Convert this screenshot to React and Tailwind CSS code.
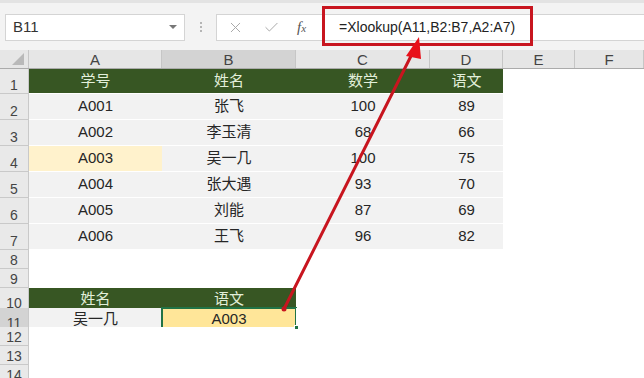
import { X, Check } from 'lucide-react'

const font = { fontFamily: '"Liberation Sans", "Noto Sans CJK SC", sans-serif' }

const GREEN = 'bg-[#375623] text-[#e2efda]'
const GRAY = 'bg-[#f2f2f2] text-[#262626]'

const rows = [
  { n: 1, h: 'h-[25px]', cells: [['学号', GREEN], ['姓名', GREEN], ['数学', GREEN], ['语文', GREEN]] },
  { n: 2, h: 'h-[26px]', cells: [['A001', GRAY], ['张飞', GRAY], ['100', GRAY], ['89', GRAY]] },
  { n: 3, h: 'h-[26px]', cells: [['A002', GRAY], ['李玉清', GRAY], ['68', GRAY], ['66', GRAY]] },
  { n: 4, h: 'h-[26px]', cells: [['A003', 'bg-[#fff2cc] text-[#262626]'], ['吴一几', GRAY], ['100', GRAY], ['75', GRAY]] },
  { n: 5, h: 'h-[26px]', cells: [['A004', GRAY], ['张大遇', GRAY], ['93', GRAY], ['70', GRAY]] },
  { n: 6, h: 'h-[26px]', cells: [['A005', GRAY], ['刘能', GRAY], ['87', GRAY], ['69', GRAY]] },
  { n: 7, h: 'h-[26px]', cells: [['A006', GRAY], ['王飞', GRAY], ['96', GRAY], ['82', GRAY]] },
  { n: 8, h: 'h-[19px]', cells: [] },
  { n: 9, h: 'h-[19px]', cells: [] },
  { n: 10, h: 'h-[20px]', cells: [['姓名', GREEN], ['语文', GREEN]] },
  { n: 11, h: 'h-[19px]', cells: [['吴一几', GRAY], ['A003', 'bg-[#ffe699] text-[#262626] outline-2 outline-[#217346] -outline-offset-1']], sel: true },
  { n: 12, h: 'h-[19px]', cells: [] },
  { n: 13, h: 'h-[19px]', cells: [] },
  { n: 14, h: 'h-[19px]', cells: [] },
]

const cols = ['A', 'B', 'C', 'D', 'E', 'F']
const grid = 'grid grid-cols-[29px_133px_134px_134px_73px_72px_1fr]'

function Toolbar() {
  return (
    <div className="h-[50px] bg-[#f3f3f3] border-t-[3px] border-[#e3e3e3] flex items-center pt-[1px]">
      <div className="ml-[5px] w-[180px] h-[27px] bg-white border border-[#d4d4d4] flex items-center justify-between px-[7px]">
        <span className="text-[15px] text-[#333]">B11</span>
        <span className="w-0 h-0 border-l-[4px] border-r-[4px] border-t-[4px] border-l-transparent border-r-transparent border-t-[#777]" />
      </div>
      <div className="w-[31px] flex flex-col items-center gap-[2px]">
        <span className="w-[2px] h-[2px] bg-[#b5b5b5]" />
        <span className="w-[2px] h-[2px] bg-[#b5b5b5]" />
        <span className="w-[2px] h-[2px] bg-[#b5b5b5]" />
      </div>
      <div className="flex-1 h-[27px] bg-white border border-[#d4d4d4] border-r-0 flex items-center">
        <X size={17} strokeWidth={1.4} className="ml-[10px] text-[#a8a8a8]" />
        <Check size={17} strokeWidth={1.4} className="ml-[19px] text-[#a8a8a8]" />
        <span className="ml-[17px] text-[15px] italic text-[#555]" style={{ fontFamily: '"Liberation Serif", serif' }}>
          f<span className="text-[11px]">x</span>
        </span>
        <span className="ml-[33px] text-[14px] text-[#222]">=Xlookup(A11,B2:B7,A2:A7)</span>
      </div>
    </div>
  )
}

function ColHeaders() {
  return (
    <div className={`${grid} h-[19px] bg-[#e6e6e6] border-b border-[#ababab]`}>
      <div className="flex items-end justify-end pr-[4px] pb-[3px] border-r border-[#c6c6c6]">
        <svg width="12" height="12" viewBox="0 0 12 12">
          <polygon points="12,0 12,12 0,12" fill="#b9b9b9" />
        </svg>
      </div>
      {cols.map((c) => (
        <div
          key={c}
          className={`flex items-end justify-center text-[15px] leading-[17px] text-[#444] border-r border-[#c6c6c6] ${c === 'B' ? 'bg-[#d3d3d3]' : ''}`}
        >
          {c}
        </div>
      ))}
    </div>
  )
}

function Row({ r }) {
  return (
    <div className={`${grid} ${r.h}`}>
      <div
        className={`flex items-end justify-center text-[14px] leading-[14px] pb-[1px] text-[#444] border-r border-b border-[#c9c9c9] ${r.sel ? 'bg-[#d3d3d3]' : 'bg-[#e9e9e9]'}`}
      >
        {r.n}
      </div>
      {cols.map((c, i) => {
        const cell = r.cells[i]
        if (!cell) return <div key={c} className="bg-white" />
        return (
          <div key={c} className={`flex items-center justify-center text-[15px] border-b border-white ${cell[1]}`}>
            {cell[0]}
          </div>
        )
      })}
    </div>
  )
}

export default function App() {
  return (
    <div className="relative w-[644px] h-[378px] overflow-hidden bg-white" style={font}>
      <Toolbar />
      <ColHeaders />
      {rows.map((r) => (
        <Row key={r.n} r={r} />
      ))}
      <div className="absolute left-[294px] top-[325px] w-[5px] h-[5px] bg-[#217346] border border-white" />
      <div className="absolute left-[322px] top-[6px] w-[211px] h-[40px] border-[3px] border-[#c8151f]" />
      <svg className="absolute left-0 top-0" width="644" height="378">
        <line x1="284" y1="309" x2="412" y2="54" stroke="#c8151f" strokeWidth="3" strokeLinecap="round" />
        <polygon points="419,37 406,56 421,59" fill="#e8101a" />
        <circle cx="284" cy="309" r="2.5" fill="#c8151f" />
      </svg>
    </div>
  )
}
